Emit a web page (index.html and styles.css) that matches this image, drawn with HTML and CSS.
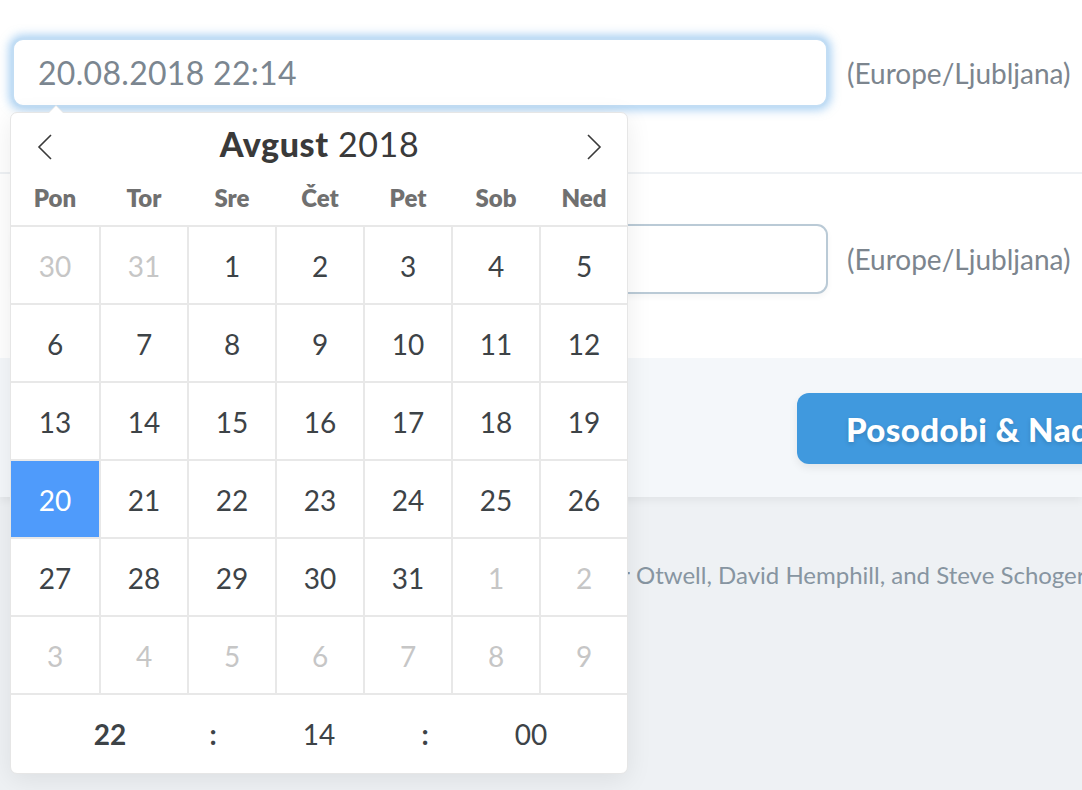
FILE: index.html
```html
<!DOCTYPE html>
<html lang="sl">
<head>
<meta charset="utf-8">
<title>Datum</title>
<link rel="stylesheet" href="styles.css">
</head>
<body>
<div class="page">
  <div class="card">
    <div class="field-row first">
      <div class="input focused">20.08.2018 22:14</div>
      <span class="tz">(Europe/Ljubljana)</span>
    </div>
    <div class="field-row second">
      <div class="input"></div>
      <span class="tz">(Europe/Ljubljana)</span>
    </div>
    <div class="card-footer">
      <button class="btn">Posodobi &amp; Nadaljuj z urejanjem</button>
    </div>
  </div>
  <div class="footer-line">
    <span class="footer-a">© 2018 Laravel LLC · By Taylor</span>
    <span class="footer-b">Otwell, David Hemphill, and Steve Schoger.</span>
  </div>

  <div class="fp">
    <div class="fp-month">
      <svg class="fp-arrow" width="16" height="26" viewBox="0 0 16 26"><path d="M14 1 L2 13 L14 25" fill="none" stroke="#3a3a3a" stroke-width="1.6"/></svg>
      <div class="fp-cur"><b>Avgust</b> 2018</div>
      <svg class="fp-arrow" width="16" height="26" viewBox="0 0 16 26"><path d="M2 1 L14 13 L2 25" fill="none" stroke="#3a3a3a" stroke-width="1.6"/></svg>
    </div>
    <div class="fp-weekdays">
      <span>Pon</span><span>Tor</span><span>Sre</span><span>Čet</span><span>Pet</span><span>Sob</span><span>Ned</span>
    </div>
    <div class="fp-days">
      <span class="muted">30</span><span class="muted">31</span><span>1</span><span>2</span><span>3</span><span>4</span><span>5</span>
      <span>6</span><span>7</span><span>8</span><span>9</span><span>10</span><span>11</span><span>12</span>
      <span>13</span><span>14</span><span>15</span><span>16</span><span>17</span><span>18</span><span>19</span>
      <span class="selected">20</span><span>21</span><span>22</span><span>23</span><span>24</span><span>25</span><span>26</span>
      <span>27</span><span>28</span><span>29</span><span>30</span><span>31</span><span class="muted">1</span><span class="muted">2</span>
      <span class="muted">3</span><span class="muted">4</span><span class="muted">5</span><span class="muted">6</span><span class="muted">7</span><span class="muted">8</span><span class="muted">9</span>
    </div>
    <div class="fp-time">
      <span class="hour">22</span><span class="sep">:</span><span>14</span><span class="sep">:</span><span>00</span>
    </div>
  </div>
</div>
</body>
</html>
```

FILE: styles.css
```css
html, body {
  margin: 0;
  padding: 0;
}
body {
  background: #eef1f4;
  font-family: "Lato", "Noto Sans", sans-serif;
  overflow: hidden;
  width: 1082px;
  height: 790px;
}
.page {
  position: relative;
  width: 1082px;
  height: 790px;
}
.card {
  background: #fff;
  box-shadow: 0 4px 8px rgba(0, 0, 0, 0.05);
}
.field-row {
  display: flex;
  align-items: center;
  gap: 19px;
  padding-left: 12px;
}
.field-row.first {
  padding-top: 38px;
  padding-bottom: 65px;
  border-bottom: 2px solid #eef1f4;
}
.field-row.second {
  padding-top: 50px;
  padding-bottom: 64px;
}
.input {
  box-sizing: border-box;
  width: 816px;
  height: 70px;
  border: 2px solid #bacad6;
  border-radius: 11px;
  background: #fff;
  font-size: 32px;
  line-height: 66px;
  padding-left: 24px;
  color: #7b8690;
  letter-spacing: 0.3px;
  box-shadow: 0 3px 6px rgba(0, 0, 0, 0.04);
}
.input.focused {
  height: 69px;
  line-height: 65px;
  border-color: #c2ddf4;
  box-shadow: 0 0 10px 3px rgba(99, 170, 232, 0.55);
}
.tz {
  font-size: 28px;
  color: #7c858e;
  white-space: nowrap;
}
.card-footer {
  background: #f4f7fa;
  padding: 35px 0 33px 797px;
  white-space: nowrap;
}
.btn {
  font-family: inherit;
  font-weight: 900;
  font-size: 33px;
  letter-spacing: 0.4px;
  color: #fff;
  background: #4099de;
  border: none;
  border-radius: 12px;
  height: 71px;
  padding: 0 48px 0 49px;
  text-shadow: 0 2px 4px rgba(0, 0, 0, 0.15);
  box-shadow: 0 4px 8px rgba(0, 0, 0, 0.07);
  white-space: nowrap;
}
.footer-line {
  display: grid;
  grid-template-columns: 630px auto;
  padding-top: 60px;
  font-size: 24px;
  line-height: 36px;
  color: #8795a1;
  white-space: nowrap;
}
.footer-a {
  text-align: right;
  overflow: hidden;
}
.footer-b {
  padding-left: 6px;
}

/* calendar overlay */
.fp {
  position: absolute;
  left: 10px;
  top: 112px;
  width: 618px;
  box-sizing: border-box;
  background: #fff;
  border: 1px solid #e6e6e6;
  border-radius: 7px;
  box-shadow: 0 6px 26px rgba(0, 0, 0, 0.08);
  color: #3d4347;
}
.fp::before,
.fp::after {
  content: "";
  position: absolute;
  left: 38px;
  border: solid transparent;
}
.fp::before {
  top: -16px;
  border-width: 8px;
  border-bottom-color: #e6e6e6;
  left: 37px;
}
.fp::after {
  top: -14px;
  border-width: 7px;
  border-bottom-color: #fff;
}
.fp-month {
  height: 57px;
  display: grid;
  grid-template-columns: 16px 1fr 16px;
  align-items: center;
  padding: 0 25px 0 26px;
}
.fp-arrow {
  display: block;
  margin-top: 10px;
}
.fp-cur {
  text-align: center;
  font-size: 34px;
  color: #3a3a3a;
  font-weight: 400;
  letter-spacing: 0.6px;
  padding-top: 3px;
}
.fp-cur b {
  font-weight: 900;
}
.fp-weekdays,
.fp-days {
  display: grid;
  grid-template-columns: 88px repeat(6, 86px);
  column-gap: 2px;
}
.fp-weekdays {
  height: 55px;
  align-items: center;
  text-align: center;
  font-size: 24px;
  font-weight: 800;
  color: #707070;
}
.fp-days {
  background: #e8e8e8;
  padding: 2px 0;
  row-gap: 2px;
  grid-template-rows: repeat(6, 76px);
}
.fp-days span {
  background: #fff;
  display: flex;
  align-items: center;
  justify-content: center;
  font-size: 28px;
  padding-top: 2px;
}
.fp-days span.muted {
  color: #c6c6c6;
}
.fp-days span.selected {
  background: #4f9bfb;
  color: #fff;
}
.fp-time {
  height: 78px;
  display: grid;
  grid-template-columns: 1fr 20px 1fr 20px 1fr;
  align-items: center;
  text-align: center;
  font-size: 28px;
  color: #3d4347;
}
.fp-time .hour {
  font-weight: 700;
  padding-left: 6px;
}
.fp-time .sep {
  font-weight: 700;
}
```
